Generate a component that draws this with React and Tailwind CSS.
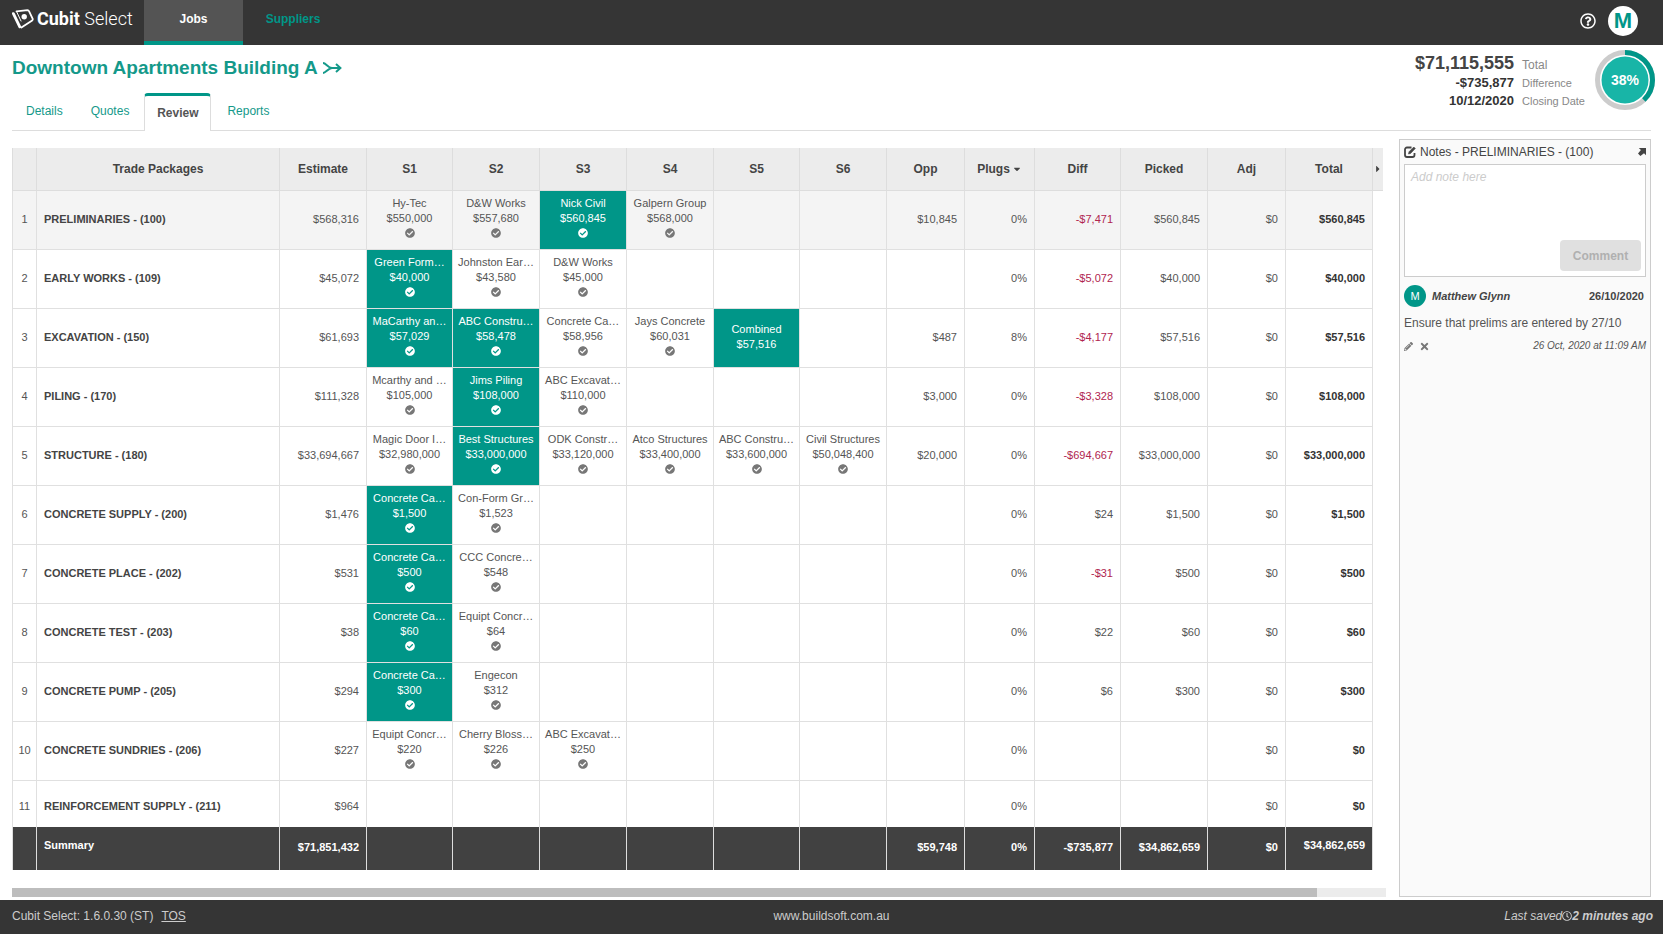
import React from "react";
import {
  FaCheckCircle,
  FaRegClock,
  FaRegQuestionCircle,
  FaPencilAlt,
  FaTimes,
  FaCaretDown,
  FaCaretRight,
} from "react-icons/fa";

const columns = [
  "S1", "S2", "S3", "S4", "S5", "S6",
];

// A quote is [supplier, price, picked, combined]
const rows = [
  { name: "PRELIMINARIES - (100)", est: "$568,316", q: [["Hy-Tec", "$550,000"], ["D&W Works", "$557,680"], ["Nick Civil", "$560,845", 1], ["Galpern Group", "$568,000"]], opp: "$10,845", plugs: "0%", diff: "-$7,471", picked: "$560,845", total: "$560,845" },
  { name: "EARLY WORKS - (109)", est: "$45,072", q: [["Green Form…", "$40,000", 1], ["Johnston Ear…", "$43,580"], ["D&W Works", "$45,000"]], opp: "", plugs: "0%", diff: "-$5,072", picked: "$40,000", total: "$40,000" },
  { name: "EXCAVATION - (150)", est: "$61,693", q: [["MaCarthy an…", "$57,029", 1], ["ABC Constru…", "$58,478", 1], ["Concrete Ca…", "$58,956"], ["Jays Concrete", "$60,031"], ["Combined", "$57,516", 1, 1]], opp: "$487", plugs: "8%", diff: "-$4,177", picked: "$57,516", total: "$57,516" },
  { name: "PILING - (170)", est: "$111,328", q: [["Mcarthy and …", "$105,000"], ["Jims Piling", "$108,000", 1], ["ABC Excavat…", "$110,000"]], opp: "$3,000", plugs: "0%", diff: "-$3,328", picked: "$108,000", total: "$108,000" },
  { name: "STRUCTURE - (180)", est: "$33,694,667", q: [["Magic Door I…", "$32,980,000"], ["Best Structures", "$33,000,000", 1], ["ODK Constr…", "$33,120,000"], ["Atco Structures", "$33,400,000"], ["ABC Constru…", "$33,600,000"], ["Civil Structures", "$50,048,400"]], opp: "$20,000", plugs: "0%", diff: "-$694,667", picked: "$33,000,000", total: "$33,000,000" },
  { name: "CONCRETE SUPPLY - (200)", est: "$1,476", q: [["Concrete Ca…", "$1,500", 1], ["Con-Form Gr…", "$1,523"]], opp: "", plugs: "0%", diff: "$24", picked: "$1,500", total: "$1,500" },
  { name: "CONCRETE PLACE - (202)", est: "$531", q: [["Concrete Ca…", "$500", 1], ["CCC Concre…", "$548"]], opp: "", plugs: "0%", diff: "-$31", picked: "$500", total: "$500" },
  { name: "CONCRETE TEST - (203)", est: "$38", q: [["Concrete Ca…", "$60", 1], ["Equipt Concr…", "$64"]], opp: "", plugs: "0%", diff: "$22", picked: "$60", total: "$60" },
  { name: "CONCRETE PUMP - (205)", est: "$294", q: [["Concrete Ca…", "$300", 1], ["Engecon", "$312"]], opp: "", plugs: "0%", diff: "$6", picked: "$300", total: "$300" },
  { name: "CONCRETE SUNDRIES - (206)", est: "$227", q: [["Equipt Concr…", "$220"], ["Cherry Bloss…", "$226"], ["ABC Excavat…", "$250"]], opp: "", plugs: "0%", diff: "", picked: "", total: "$0" },
  { name: "REINFORCEMENT SUPPLY - (211)", est: "$964", q: [], opp: "", plugs: "0%", diff: "", picked: "", total: "$0" },
];

function Logo() {
  return (
    <a href="#home" className="flex w-[144px] shrink-0 items-center gap-[3px] pb-2 pl-3 text-white">
      <svg viewBox="0 0 22 20" className="h-5 w-[22px] shrink-0" fill="none" stroke="currentColor" strokeWidth="1.8" strokeLinejoin="round">
        <path d="M1.400 4.600 7.800 17.800" strokeWidth="2.800" strokeLinecap="round" />
        <path d="M4.500 2.400 15.500 1.200Q16.600 1.200 17 2.200L20.600 9.600Q21 10.600 20.200 11.400L9.400 18.600" strokeLinecap="round" />
        <path d="M4.500 2.400 9.200 12.400" strokeWidth="1" />
        <circle cx="12.200" cy="7.800" r="2.700" fill="currentColor" stroke="none" />
      </svg>
      <span className="font-[Roboto] text-lg leading-5 whitespace-nowrap">
        <b className="font-bold">Cubit</b> <span className="font-light">Select</span>
      </span>
    </a>
  );
}

function TopBar() {
  return (
    <header className="flex h-[45px] items-stretch bg-[#353535] text-xs font-bold">
      <Logo />
      <nav className="flex">
        <a href="#jobs" className="flex w-[99px] items-center justify-center border-b-4 border-[#009688] bg-[#545454] pb-1 text-white">Jobs</a>
        <a href="#suppliers" className="flex w-[100px] items-center justify-center pb-2 text-[#009688]">Suppliers</a>
      </nav>
      <div className="ml-auto flex items-center gap-3 pr-[25px] pb-1">
        <button aria-label="Help" className="text-white"><FaRegQuestionCircle className="size-4" /></button>
        <button className="flex size-[30px] items-center justify-center rounded-full bg-white text-[22px] leading-none text-[#009688]">M</button>
      </div>
    </header>
  );
}

function Progress() {
  return (
    <svg viewBox="0 0 60 60" className="size-[60px]" role="img" aria-label="38% complete">
      <circle cx="30" cy="30" r="27.5" fill="none" stroke="#cccccc" strokeWidth="5" />
      <circle cx="30" cy="30" r="27.5" fill="none" stroke="#009688" strokeWidth="5" pathLength="100" strokeDasharray="38 100" transform="rotate(-90 30 30)" />
      <circle cx="30" cy="30" r="23.5" fill="#18b5a7" />
      <text x="30" y="34.500" textAnchor="middle" fill="#fff" fontSize="14" fontWeight="700">38%</text>
    </svg>
  );
}

function JobHeader() {
  return (
    <section className="mr-3 ml-3 flex h-[86px] items-start justify-between border-b border-[#dddddd]">
      <div className="flex h-[86px] flex-col justify-between">
        <h1 className="flex items-center gap-1 pt-[11px] text-[19px] leading-6 font-bold text-[#14998a]">
          Downtown Apartments Building A
          <svg viewBox="0 0 20 12" className="h-3 w-5" fill="none" stroke="currentColor" strokeWidth="2">
            <path d="M1 1C4 1 6 6 10 6H18M1 11C4 11 6 6 10 6M14 2 18.4 6 14 10" />
          </svg>
        </h1>
        <nav className="flex items-end text-xs text-[#14998a]">
          <a href="#details" className="px-[14px] pb-3 leading-4">Details</a>
          <a href="#quotes" className="px-[14px] pb-3 leading-4">Quotes</a>
          <a href="#review" className="ml-px flex h-[38px] w-[67px] items-center justify-center rounded-t border-x border-t-3 border-x-[#dddddd] border-t-[#009688] bg-white pb-0.5 font-bold text-[#555]">Review</a>
          <a href="#reports" className="px-4 pb-3 leading-4">Reports</a>
        </nav>
      </div>
      <div className="-mr-1 flex items-start gap-[10px]">
        <dl className="grid grid-cols-[auto_auto] items-baseline gap-x-2 pt-[7px] text-[13px] leading-[18px]">
          <dd className="text-right text-lg leading-[22px] font-bold text-[#444]">$71,115,555</dd>
          <dt className="text-xs text-[#888]">Total</dt>
          <dd className="text-right font-bold text-[#333]">-$735,877</dd>
          <dt className="text-[11px] text-[#888]">Difference</dt>
          <dd className="text-right font-bold text-[#333]">10/12/2020</dd>
          <dt className="text-[11px] text-[#888]">Closing Date</dt>
        </dl>
        <div className="pt-[5px]"><Progress /></div>
      </div>
    </section>
  );
}

function Quote({ data }) {
  if (!data) return <td className="border-r border-b border-[#e0e0e0]" />;
  const [name, price, picked, combined] = data;
  return (
    <td className={`border-r border-b border-[#e0e0e0] text-center ${combined ? "pb-0.5" : "pb-1.5"} ${picked ? "bg-[#009688] text-white" : ""}`}>
      <div className="leading-[15px] whitespace-nowrap">{name}</div>
      <div className="leading-[15px]">{price}</div>
      {!combined && <FaCheckCircle className={`mx-auto mt-0.5 size-[10px] ${picked ? "text-white" : "text-[#777]"}`} />}
    </td>
  );
}

const num = "border-r border-b border-[#e0e0e0] pr-[7px] pb-0.5 text-right";
const head = "border-r border-b border-[#dddddd] bg-[#ececec] font-bold";
const sum = "border-r border-[#dddddd] pr-[7px] pb-0.5 text-right";

function PackagesTable() {
  return (
    <table className="w-full table-fixed border-separate border-spacing-0 text-[11px] text-[#555]">
      <colgroup>
        <col className="w-[25px]" />
        <col />
        <col className="w-[87px]" />
        <col className="w-[86px]" />
        <col className="w-[87px]" />
        <col className="w-[87px]" />
        <col className="w-[87px]" />
        <col className="w-[86px]" />
        <col className="w-[87px]" />
        <col className="w-[78px]" />
        <col className="w-[70px]" />
        <col className="w-[86px]" />
        <col className="w-[87px]" />
        <col className="w-[78px]" />
        <col className="w-[87px]" />
        <col className="w-[10px]" />
      </colgroup>
      <thead className="text-xs text-[#444]">
        <tr className="h-[43px]">
          <th className={`${head} border-l`} aria-label="Row" />
          <th className={head}>Trade Packages</th>
          <th className={head}>Estimate</th>
          {columns.map((c) => <th key={c} className={head}>{c}</th>)}
          <th className={head}>Opp</th>
          <th className={head}><button className="inline-flex items-center gap-0.5 font-bold">Plugs <FaCaretDown className="size-[10px]" /></button></th>
          <th className={head}>Diff</th>
          <th className={head}>Picked</th>
          <th className={head}>Adj</th>
          <th className={head}>Total</th>
          <th className="border-b border-[#dddddd] bg-[#ececec]"><button aria-label="More columns" className="block"><FaCaretRight className="size-[10px]" /></button></th>
        </tr>
      </thead>
      <tbody>
        {rows.map((r, i) => {
          const last = i === rows.length - 1;
          return (
            <tr key={r.name} className={last ? "h-[46px] *:border-b-0 *:pt-[7px]" : i === 0 ? "h-[59px] *:not-last:not-[.text-white]:bg-[#f4f4f4]" : "h-[59px]"}>
              <td className="border-r border-b border-l border-[#e0e0e0] pb-0.5 text-center">{i + 1}</td>
              <td className="border-r border-b border-[#e0e0e0] pb-0.5 pl-[7px] font-bold text-[#444]">{r.name}</td>
              <td className={num}>{r.est}</td>
              {columns.map((c, n) => <Quote key={c} data={r.q[n]} />)}
              <td className={num}>{r.opp}</td>
              <td className={num}>{r.plugs}</td>
              <td className={`${num} ${r.diff.startsWith("-") ? "text-[#b0254f]" : ""}`}>{r.diff}</td>
              <td className={num}>{r.picked}</td>
              <td className={num}>$0</td>
              <td className={`${num} font-bold text-[#333]`}>{r.total}</td>
              <td />
            </tr>
          );
        })}
      </tbody>
      <tfoot className="font-bold text-white">
        <tr className="h-[43px] *:not-last:bg-[#414141]">
          <td className="border-r border-l border-[#dddddd]" />
          <td className="border-r border-[#dddddd] pb-1.5 pl-[7px]">Summary</td>
          <td className={sum}>$71,851,432</td>
          {columns.map((c) => <td key={c} className={sum} />)}
          <td className={sum}>$59,748</td>
          <td className={sum}>0%</td>
          <td className={sum}>-$735,877</td>
          <td className={sum}>$34,862,659</td>
          <td className={sum}>$0</td>
          <td className="border-r border-[#dddddd] pr-[7px] pb-1.5 text-right">$34,862,659</td>
          <td />
        </tr>
      </tfoot>
    </table>
  );
}

function Notes() {
  return (
    <aside className="flex w-[252px] shrink-0 flex-col border border-[#cccccc] bg-[#fafafa] px-1 text-xs text-[#444]">
      <div className="flex h-6 items-center gap-1">
        <svg viewBox="0 0 12 12" className="size-3" fill="none" stroke="currentColor" strokeWidth="1.8">
          <path d="M7.500 1.500H3A2 2 0 0 0 1 3.500V9A2 2 0 0 0 3 11H8.500A2 2 0 0 0 10.500 9V7" />
          <path d="M4.500 8 5 5.800 9.800 1 11.300 2.500 6.600 7.400Z" fill="currentColor" strokeWidth=".6" />
        </svg>
        <h2>Notes - PRELIMINARIES - (100)</h2>
        <button aria-label="Open notes" className="ml-auto">
          <svg viewBox="0 0 8 8" className="size-2" fill="currentColor"><path d="M.8 0H8V7.200L6 5.200 2.400 8 0 5.600 2.900 2.100Z" /></svg>
        </button>
      </div>
      <div className="flex h-[113px] flex-col border border-[#cccccc] bg-white p-1 pb-[5px]">
        <textarea aria-label="Note" placeholder="Add note here" className="w-full flex-1 resize-none px-0.5 outline-none placeholder:text-[#ccc] placeholder:italic" />
        <button className="h-[31px] w-[81px] self-end rounded-sm bg-[#e0e0e0] font-bold text-[#b0b0b0]">Comment</button>
      </div>
      <article>
        <div className="flex items-center gap-1.5 pt-2 pr-0.5 text-[11px] font-bold">
          <span className="flex size-[22px] items-center justify-center rounded-full bg-[#009688] font-normal text-white">M</span>
          <i>Matthew Glynn</i>
          <time className="ml-auto">26/10/2020</time>
        </div>
        <p className="pt-2 leading-4 text-[#555]">Ensure that prelims are entered by 27/10</p>
        <div className="flex items-center gap-1.5 pt-[7px] text-[10px] leading-4 text-[#777]">
          <button aria-label="Edit note"><FaPencilAlt className="size-[9px]" /></button>
          <button aria-label="Delete note"><FaTimes className="size-[11px]" /></button>
          <i className="ml-auto text-[#555]">26 Oct, 2020 at 11:09 AM</i>
        </div>
      </article>
    </aside>
  );
}

export default function App() {
  return (
    <div className="flex min-h-screen flex-col bg-white font-['Liberation_Sans',Arial,sans-serif]">
      <TopBar />
      <JobHeader />
      <main className="flex flex-1 gap-[13px] pt-2 pr-3 pb-[3px] pl-3">
        <div className="flex min-w-0 flex-1 flex-col justify-between pt-[9px]">
          <div className="pr-[3px]"><PackagesTable /></div>
          <div className="h-[9px] bg-[#ececec]"><div className="h-full w-[95%] bg-[#bdbdbd]" /></div>
        </div>
        <Notes />
      </main>
      <footer className="grid h-[34px] grid-cols-3 items-center bg-[#353535] px-3 pb-0.5 text-xs text-[#ccc]">
        <div className="flex gap-2"><span>Cubit Select: 1.6.0.30 (ST)</span><a href="#tos" className="underline">TOS</a></div>
        <div className="text-center">www.buildsoft.com.au</div>
        <div className="-mr-0.5 flex items-center justify-end italic">Last saved<FaRegClock className="size-[10px]" /><b>2 minutes ago</b></div>
      </footer>
    </div>
  );
}
